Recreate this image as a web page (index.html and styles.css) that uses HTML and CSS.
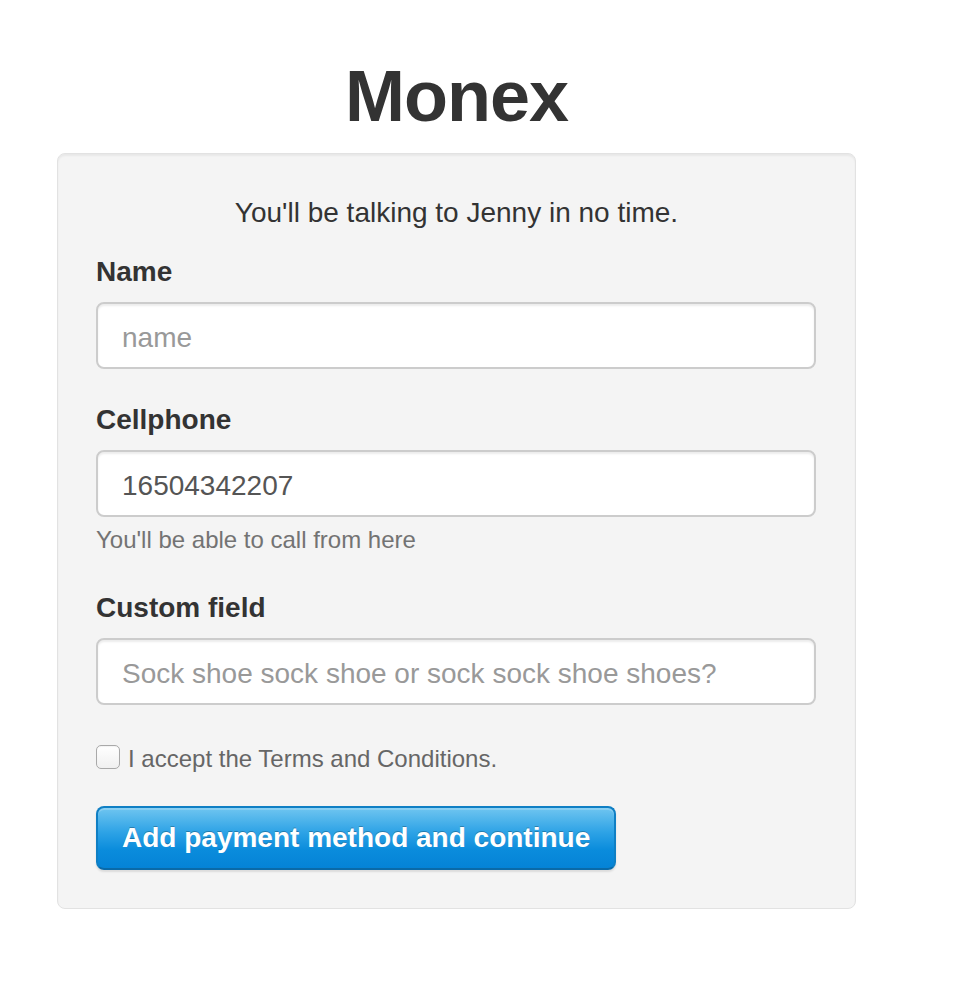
FILE: index.html
```html
<!DOCTYPE html>
<html lang="en">
<head>
<meta charset="utf-8">
<title>Monex</title>
<link rel="stylesheet" href="styles.css">
</head>
<body>
<div class="container">
  <h1 class="brand">Monex</h1>
  <form class="well">
    <p class="intro">You'll be talking to Jenny in no time.</p>
    <div class="group">
      <label class="field-label" for="name">Name</label>
      <input class="field" id="name" type="text" placeholder="name">
    </div>
    <div class="group">
      <label class="field-label" for="cell">Cellphone</label>
      <input class="field" id="cell" type="text" value="16504342207">
      <p class="help">You'll be able to call from here</p>
    </div>
    <div class="group">
      <label class="field-label" for="custom">Custom field</label>
      <input class="field" id="custom" type="text" placeholder="Sock shoe sock shoe or sock sock shoe shoes?">
    </div>
    <label class="check-row"><input class="check" type="checkbox"><span>I accept the Terms and Conditions.</span></label>
    <div class="actions">
      <button class="btn-primary" type="button">Add payment method and continue</button>
    </div>
  </form>
</div>
</body>
</html>
```
FILE: styles.css
```css
html, body {
  margin: 0;
  padding: 0;
  background: #ffffff;
}
body {
  font-family: "Liberation Sans", Arial, Helvetica, sans-serif;
  color: #333333;
}
.container {
  width: 799px;
  margin-left: 57px;
  padding-top: 56px;
}
.brand {
  margin: 0 0 17px 0;
  height: 80px;
  line-height: 80px;
  font-size: 72px;
  font-weight: bold;
  text-align: center;
  color: #333333;
  letter-spacing: -1px;
}
.well {
  display: flex;
  flex-direction: column;
  margin: 0;
  padding: 38px;
  background: #f4f4f4;
  border: 1px solid #e2e2e2;
  border-radius: 8px;
  box-shadow: inset 0 2px 2px rgba(0, 0, 0, 0.05);
}
.intro {
  margin: 0;
  height: 42px;
  line-height: 42px;
  font-size: 28px;
  text-align: center;
  color: #333333;
}
.group {
  display: flex;
  flex-direction: column;
}
.group + .group {
  margin-top: 31px;
}
.intro + .group {
  margin-top: 18px;
}
.field-label {
  display: block;
  height: 40px;
  line-height: 40px;
  font-size: 28px;
  font-weight: bold;
  color: #333333;
  margin-bottom: 10px;
}
.field {
  box-sizing: border-box;
  width: 720px;
  height: 67px;
  margin: 0;
  padding: 4px 24px 0 24px;
  font-family: "Liberation Sans", Arial, Helvetica, sans-serif;
  font-size: 28px;
  color: #555555;
  background: #ffffff;
  border: 2px solid #cccccc;
  border-radius: 8px;
  box-shadow: inset 0 2px 2px rgba(0, 0, 0, 0.075);
  outline: none;
}
.field::placeholder {
  color: #999999;
}
.help {
  margin: 5px 0 0 0;
  height: 36px;
  line-height: 36px;
  font-size: 24px;
  color: #737373;
}
.group:has(.help) + .group {
  margin-top: 30px;
}
.check-row {
  display: flex;
  align-items: center;
  gap: 8px;
  margin-top: 32px;
  height: 40px;
  font-size: 24px;
  color: #666666;
}
.check-row span {
  padding-top: 3px;
}
.check {
  appearance: none;
  -webkit-appearance: none;
  box-sizing: border-box;
  width: 24px;
  height: 24px;
  margin: 0;
  border: 1px solid #a9a9a9;
  border-radius: 5px;
  background: linear-gradient(#ffffff, #f0f0f0);
  box-shadow: inset 0 1px 1px rgba(0, 0, 0, 0.05);
}
.actions {
  margin-top: 29px;
  display: flex;
}
.btn-primary {
  height: 64px;
  padding: 0 24px;
  font-family: "Liberation Sans", Arial, Helvetica, sans-serif;
  font-size: 28px;
  font-weight: bold;
  color: #ffffff;
  text-shadow: 0 -1px 0 rgba(0, 0, 0, 0.25);
  background: linear-gradient(#6fc5f0 0%, #2ea3e6 40%, #0a8cdc 70%, #0583d6 100%);
  border: 2px solid #0f7fc4;
  border-bottom-color: #0a6aa8;
  border-radius: 8px;
  box-shadow: inset 0 2px 0 rgba(255, 255, 255, 0.2), 0 2px 2px rgba(0, 0, 0, 0.1);
  cursor: pointer;
}
```
